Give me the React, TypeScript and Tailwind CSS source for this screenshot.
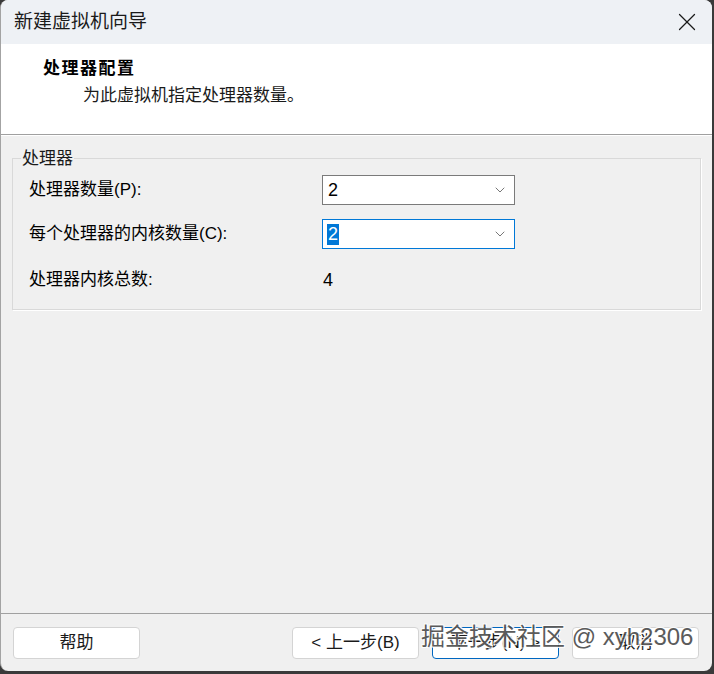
import { ChevronDown, X } from "lucide-react";

const FONT = "font-['Liberation_Sans','Noto_Sans_CJK_SC',sans-serif]";

function Combo({ value, focused }: { value: string; focused?: boolean }) {
  return (
    <div
      className={`flex h-[30px] w-[193px] items-center justify-between bg-white pl-[4px] pr-[6px] ${
        focused ? "border border-[#0078d7]" : "border border-[#7a7a7a]"
      }`}
    >
      {focused ? (
        <span className="bg-[#0078d7] px-[1px] text-[18px] leading-[21px] text-white">{value}</span>
      ) : (
        <span className="px-[1px] text-[18px] leading-[21px] text-black">{value}</span>
      )}
      <ChevronDown size={16} strokeWidth={1.1} className="text-[#444]" />
    </div>
  );
}

function Button({ label, primary }: { label: string; primary?: boolean }) {
  return (
    <button
      className={`flex h-[32px] w-[127px] items-center justify-center rounded-[4px] bg-white text-[17px] text-[#1a1a1a] ${
        primary ? "border border-[#0067c0]" : "border border-[#d4d4d4]"
      }`}
    >
      {label}
    </button>
  );
}

export default function App() {
  return (
    <div className={`h-[674px] w-[714px] bg-[#3a3a3a] ${FONT}`}>
      <div className="flex h-[671px] w-[712px] flex-col overflow-hidden rounded-[8px] border-l border-[#a3a3a3] bg-[#f0f0f0]">
        {/* title bar */}
        <div className="flex h-[44px] shrink-0 items-center justify-between bg-[#eef1f5] pl-[13px] pr-[10px]">
          <span className="text-[19px] leading-[20px] text-[#1a1a1a]">新建虚拟机向导</span>
          <X size={30} strokeWidth={1} className="text-[#1a1a1a]" />
        </div>

        {/* header */}
        <div className="flex h-[91px] shrink-0 flex-col border-b border-[#a0a0a0] bg-white pt-[15px]">
          <div className="pl-[42px] text-[17px] font-bold leading-[20px] tracking-[1.5px] text-black">处理器配置</div>
          <div className="mt-[7px] pl-[82px] text-[17px] leading-[20px] text-[#1a1a1a]">
            为此虚拟机指定处理器数量。
          </div>
        </div>

        {/* body */}
        <div className="flex-1 border-t border-white px-[11px] pt-[14px]">
          <fieldset className="border border-[#d9d9d9] pb-[17px] pl-[16px] shadow-[1px_1px_0_#fff]">
            <legend className="-ml-[8px] px-[1px] text-[17px] leading-[17px] text-[#1a1a1a]">处理器</legend>
            <div className="flex flex-col pt-[8px] text-[17px] text-black">
              <div className="flex items-center">
                <span className="w-[293px] leading-[24px]">处理器数量(P):</span>
                <Combo value="2" />
              </div>
              <div className="mt-[14px] flex items-center">
                <span className="w-[293px] leading-[24px]">每个处理器的内核数量(C):</span>
                <Combo value="2" focused />
              </div>
              <div className="mt-[19px] flex items-center">
                <span className="w-[293px] leading-[24px]">处理器内核总数:</span>
                <span className="pl-[1px] text-[18px] leading-[24px]">4</span>
              </div>
            </div>
          </fieldset>
        </div>

        {/* footer */}
        <div className="relative flex h-[58px] shrink-0 items-start justify-between border-t border-[#a0a0a0] pl-[12px] pr-[13px] pt-[13px]">
          <Button label="帮助" />
          <div className="flex gap-[13px]">
            <Button label="< 上一步(B)" />
            <Button label="下一步(N) >" primary />
            <Button label="取消" />
          </div>
          {/* watermark stamped over the buttons */}
          <div className="pointer-events-none absolute left-[420px] top-[8px] whitespace-nowrap text-[24px] leading-[30px] text-[#4a4a4a] opacity-90 [text-shadow:1px_1px_0_#fff,-1px_-1px_0_#fff,1px_-1px_0_#fff,-1px_1px_0_#fff]">
            掘金技术社区 @ xyh2306
          </div>
        </div>
      </div>
    </div>
  );
}
